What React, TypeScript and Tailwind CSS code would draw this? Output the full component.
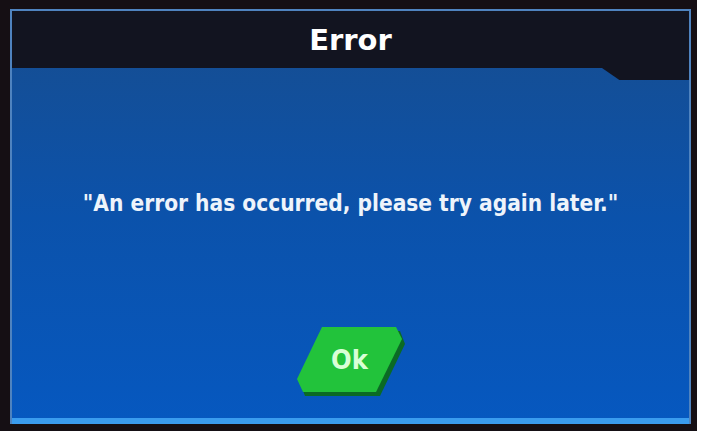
import React from "react";

export default function App() {
  return (
    <div className="w-[704px] h-[434px] bg-white overflow-hidden">
      <div className="w-[697px] h-[431px] bg-[#150f14] pl-[10px] pt-[9px]">
        <div className="w-[681px] h-[415px] flex flex-col border-x-2 border-t-2 border-[#4f83bf] bg-gradient-to-b from-[#164d8f] via-[#0b52ab] to-[#0658c0]">
          <div className="h-[57px] bg-[#121420] flex items-center justify-center">
            <span
              className="text-white font-bold text-[29px] leading-none mt-[2px]"
              style={{ fontFamily: '"DejaVu Sans", sans-serif' }}
            >
              Error
            </span>
          </div>
          <div className="flex justify-end">
            <div className="w-[87px] h-[12px] bg-[#121420] [clip-path:polygon(0_0,100%_0,100%_100%,20%_100%)]" />
          </div>
          <div className="mt-[109px] h-[28px] flex items-center justify-center">
            <span
              className="text-[#eef4fb] font-bold text-[22.5px] leading-none"
              style={{ fontFamily: '"DejaVu Sans Condensed", "DejaVu Sans", sans-serif' }}
            >
              "An error has occurred, please try again later."
            </span>
          </div>
          <div className="mt-[107px] flex justify-center">
            <button className="relative w-[112px] h-[72px] ml-[-2px]">
              <svg className="absolute inset-0" width="112" height="72" viewBox="0 0 112 72">
                <polygon points="31,7 106,7 111,20 86,72 11,72 6,59" fill="#0b6a25" />
                <polygon points="28,3 102,3 108,15 82,68 9,68 3,55" fill="#22c33b" />
              </svg>
              <span
                className="relative text-[#d9ffd6] font-bold text-[27px] leading-none"
                style={{ fontFamily: '"DejaVu Sans Condensed", "DejaVu Sans", sans-serif' }}
              >
                Ok
              </span>
            </button>
          </div>
          <div className="flex-1" />
          <div className="h-[6px] bg-[#3a9cef]" />
        </div>
      </div>
    </div>
  );
}
